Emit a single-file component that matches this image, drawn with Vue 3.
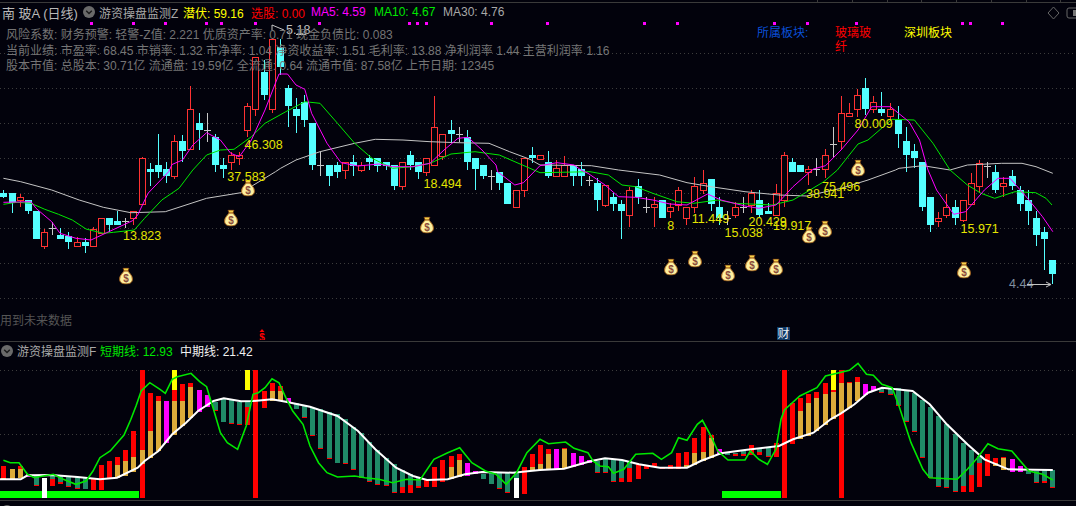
<script setup>
// x position of bar i, same grid for both panels
const barX = (i) => Math.round(3.4 + 8.13 * i);

// [kind, high, bodyTop, bodyBottom, low]  c = falling, r = rising, x = doji cross
const candles = [
  ["c",190,193.3,196.7,198.3],["c",193.3,193.3,203.3,213.3],["r",194.3,197.7,200.7,206.7],["c",200,200,210.7,214],
  ["c",210.7,210.7,239,239],["r",229.3,232.3,246.7,248.7],["x",221.7,228.3,228.3,235],["c",228.3,235,239,239],
  ["c",231.7,235.7,241.7,248.7],["r",236.7,242.3,246.7,246.7],["c",238.3,242.3,246,252.7],["r",227.3,229,246.7,246.7],
  ["r",218.3,218.3,233.3,233.3],["c",218.3,218.3,225,232.3],["c",210.7,221,225,225],["x",218.3,221.7,221.7,228.3],
  ["r",211.3,211.3,218.7,225],["r",156.7,158.3,204.7,204.7],["c",163.3,169,172,185.7],["c",134.3,165,172,178.3],
  ["c",162,169,176,183.3],["r",135,141.7,176.7,179],["c",135,141,150.7,162.3],["r",86,109.3,149,149],
  ["c",113.3,123.3,130,150],["x",113.3,130.7,130.7,141.7],["c",134.3,137.3,165,172],["c",158.3,165,169,178.3],
  ["r",151.7,155,162.3,170],["r",151.7,155,158.3,165],["r",103.3,106.7,130,136.7],["r",57.3,57.3,109.3,115.7],
  ["c",60,71.7,95,100],["r",38,39.3,109.3,113.3],["c",39.3,46.7,66.7,75],["c",85,88.3,106,126.7],
  ["c",98.3,109,115.7,133.3],["c",95,101.7,120,126.7],["c",123.3,123.3,165,170],["x",151.7,165,165,176],
  ["c",165,165,176,185.7],["c",161.7,165,172,178.3],["r",162.7,162.7,170,179],["c",155,162.3,165.7,176],
  ["r",161.7,165.7,170,171.7],["c",155,158.3,162.3,170],["c",158.3,158.3,165.7,171.7],["c",162.3,162.3,165.7,170],
  ["c",165,165,185.7,190],["r",162.3,162.3,186.7,190],["c",150.7,155,165,170],["c",162.3,162.3,171.7,179],
  ["r",158.3,158.3,172.7,176],["r",96,127.3,165,165],["r",134.3,134.3,156.7,160],["c",120,130,134,143.3],
  ["x",126.7,134.3,134.3,141.7],["c",130,136.7,161.7,170],["c",158.3,158.3,169,190],["c",165,165,176,179],
  ["x",170,176,176,190],["c",172,172,182.7,190],["c",182.7,182.7,204,204],["r",190,190,207.7,207.7],
  ["r",158.3,158.3,190.7,196.7],["c",146.7,155,158.3,163.3],["r",155,155,159,159],["c",151,162.3,176,178.3],
  ["r",160,168,176.7,176.7],["r",156,165,176,176],["c",165,165,176,185.7],["c",162.3,169,176,185.7],
  ["x",176,180.7,180.7,185.7],["c",178.3,182.7,200,210.7],["r",185.7,185.7,205,206.7],["c",193.3,196.7,204,210.7],
  ["c",200,204,210.7,239],["r",186.7,190,215,227.3],["c",179.3,185.7,196.7,204],["x",197.3,207.3,207.3,213.3],
  ["r",196.7,204,207.7,227.3],["c",200,200,218,218],["r",203.3,207.3,211.3,218.3],["r",187.3,190.3,205,210.7],
  ["r",207.3,207.3,218.7,225],["r",177.3,186,207.3,213.3],["r",170,183.3,190.7,194],["c",179,179,204,210.7],
  ["c",196.7,207.3,218,225],["x",210.7,218,218,225],["r",201.7,207.3,215,218.3],["x",197.3,207.3,207.3,213.3],
  ["r",190,193.3,205,213.3],["c",190,200,215,217.3],["c",203.3,210.7,214.3,214.3],["r",184,193.3,215,215],
  ["r",152.3,155,200.7,206.7],["c",158.3,162.3,171.7,171.7],["c",165,165,171.7,171.7],["r",166,169,172.7,185],
  ["x",158.3,169,169,176],["r",149,155,169,178.3],["x",127,144.3,144.3,158.3],["r",96,113.3,141.7,150],
  ["r",103.3,113.3,116.7,116.7],["r",89,95.7,109.3,116.7],["c",78.3,88.3,109.3,115],["r",96,102.7,109.3,113.3],
  ["c",92.3,109.3,112.7,116],["r",103.3,109.3,116.7,120],["c",106,120,134,147.7],["c",127,141,155,172],
  ["c",144,151,157.7,168],["c",162.3,162.3,206.7,210.7],["c",196.7,196.7,225,232],["r",212,218.3,221.7,227.3],
  ["r",194,207.3,215,218.3],["c",200,207.3,218,225],["r",200,200,220,221.7],["r",173.3,183.3,204,205],
  ["r",160,163,186.7,193.3],["x",162.3,166.7,166.7,178.3],["c",165,171.7,190,192.7],["r",176.7,183.3,186.7,196.7],
  ["c",170,176,186,190],["c",186,190,204,210.7],["c",190,200,210.7,225],["c",210.7,218,235,246],
  ["c",227.3,232,239,270],["c",260,260,274,284],
];

const ma5 = [[3.4,202.3],[31,201.7],[36,208.3],[51.7,221.7],[60,233.3],[76,238.3],[91,240],[106.7,232.7],[132.6,220.7],[137.7,215],[148,193.3],[168.7,171.7],[172,164.5],[182.5,160],[192.8,145],[206.6,132.7],[220.4,140],[230.7,153.3],[239.3,156.7],[251.4,140],[265,110],[279,74],[287.5,74],[296,85],[304.8,89.3],[311.6,113.3],[327,143.3],[341,162.7],[358,166],[378.8,164],[392.6,166.7],[413,166.7],[430,163.3],[444,150],[458,138.3],[468,137.3],[482,150],[496,165],[497.6,171.7],[514.8,185],[523.4,182.7],[540,165.7],[557,162.7],[574,165],[581,170],[588,173.3],[605,185],[618.6,196.7],[635.7,197.3],[652.8,200],[670,204],[687,205],[707.5,194],[721,200],[745,206],[758.8,208.3],[776,205],[793,186.7],[810,171.7],[813.5,169],[825.5,165.7],[841,150],[858,130],[871.6,106.7],[890.4,106.7],[909,121.7],[919.5,140],[926,163.3],[928,170],[936.6,190],[953.7,214.3],[965.6,211.7],[984.4,190],[998,178.3],[1010,178.3],[1029,200],[1042.5,216.7],[1052.8,231.7]];
const ma10 = [[3.4,204.3],[17,202.3],[31,203.3],[44.8,209.3],[58.5,214.3],[72.3,220],[86,229],[103.3,233.3],[113.6,232.3],[134.3,230],[144.6,218.3],[161.8,200],[179,188.3],[192.8,170],[206.6,155],[220.4,150],[234,149.3],[251.4,136.7],[265,123.3],[285.8,111.7],[304.8,101.7],[320,103.3],[337.5,123.3],[354.7,143.3],[372,158.3],[392.6,168.3],[413,166.7],[430,163.3],[451,154],[475,151.7],[499.3,155],[527,167],[540,172.7],[590,171.7],[608.4,175],[622,185],[635.7,186.7],[652.8,193.3],[676.8,201.7],[693.8,203.3],[717.8,200],[734.9,203.3],[772.5,205],[793,200],[810,190],[823.8,181.7],[837.4,170],[858,144],[868,140],[892,119.3],[914.4,120],[933,143.3],[950,170],[967.4,185],[981,193.3],[994.7,198.3],[1015,191.7],[1035.7,192.7],[1046,198.3],[1052,205]];
const ma30 = [[3.4,178.3],[20.7,181.7],[51.7,190],[79.2,200],[103.3,207.3],[130.8,212.7],[165.3,211.7],[206.6,198.3],[241,192.7],[275.5,171.7],[280.6,168.3],[296,160],[320,151.7],[354.7,143.3],[375.3,139.3],[403,140],[430,141.7],[458,142.7],[489,143.3],[509.6,151.7],[530,159.3],[540,165],[591.3,165.7],[618.6,170],[659.7,175],[687,182.7],[711,186.7],[745,191.7],[779,195],[806.7,196],[841,188.3],[868,180],[895.5,170],[899,168.3],[923,165.7],[950,170],[967.4,165],[1001.5,163.3],[1022,163.3],[1036,166.7],[1052.8,173.3]];

const points = (line) => line.map((p) => p.join(",")).join(" ");

const mainGrid = [53.5, 88.5, 123.5, 158.5, 193.5, 228.5, 263.5, 298.5];
const subGrid = [370.5, 434.5];
const marks = [91,133,165,206,221,255,319,409,417,426,491,547,644,677,774,807,856,962,970,1002];
const ticks = [817,852,887,921,956,991,1026,1060];

const labels = [
  ["46.308",244.5,144.3],["37.583",227.3,176.7],["13.823",123,235.7],["18.494",423.5,183.3],
  ["80.009",854.5,123.7],["75.496",822,186.7],["38.941",806,193.3],["11.449",691.8,218.7],
  ["8",667.2,225.3],["15.038",724.6,232.7],["20.429",748.5,221.7],["19.917",773,225.3],["15.971",960.5,228.7],
];
const bags = [[126,276],[231,218],[248,188],[427,225],[671,267],[695,259],[728,273],[752,263],[776,267],[809,235],[825,229],[858,168],[964,270]];

// stacked segments of each lower bar: r red, g gold, m magenta, t teal, y yellow, w white
const stacks = [
  ["r",466,477.7,"g",477.7,479.3],["g",468.7,479.3],["r",466,468.7,"g",468.7,477.7],["m",473.7,476.7],
  ["t",476,485.3,"r",485.3,486],["w",477.7,498],["t",475.3,479.3,"r",479.3,486],["t",476,481.7,"r",481.7,483.7],
  ["t",476,486,"r",486,487],["t",477,487.7,"r",487.7,488.7],["t",477.7,488.7,"r",488.7,489.3],["r",478.3,490],
  ["r",465,490],["r",461,479.3],["r",457,465,"g",465,477.7],["r",450,461,"g",461,476],
  ["r",431,457,"g",457,472],["r",370,450,"g",450,464,"r",464,498],["r",392.7,431,"g",431,457.7],["r",396,401,"g",401,451],
  ["m",401,443.3],["y",370,390.3,"r",390.3,401,"g",401,435],["r",383.7,401,"g",401,426],["r",383.3,387,"g",387,417.7],
  ["m",390,412],["m",395.3,407],["t",401.7,410,"r",410,410.7],["t",399.3,421.7,"r",421.7,422.3],
  ["t",399.3,423.3,"r",423.3,424],["t",401.7,424.3,"r",424.3,425],["y",370,389.7,"t",401.7,407,"r",407,425],["r",370,498],
  ["r",391,407.7],["r",382.7,391,"g",391,401],["r",386,391,"g",391,401],["m",397.7,402.7],
  ["t",402.7,408.7,"r",408.7,409.3],["t",405,417,"r",417,417.7],["t",407.7,435,"r",435,435.7],["t",409.3,448.3,"r",448.3,449],
  ["t",412,458.3,"r",458.3,459],["t",414.3,462.7,"r",462.7,463.3],["t",419.3,463.3,"r",463.3,464],["t",426.7,469.3,"r",469.3,470],
  ["t",433.3,477,"r",477,477.7],["t",442,481.3,"r",481.3,482],["t",450.3,484.3,"r",484.3,485],["t",457.7,485.3,"r",485.3,486],
  ["t",464.3,492.7,"r",492,492.7],["t",470.3,486.7,"r",486.7,492.7],["t",474.3,485.3,"r",485.3,492.7],["t",477,486,"r",486,487.7],
  ["r",480.3,487],["r",467,487],["r",460.3,481.7],["r",456,467,"g",467,479.3],
  ["r",453.7,460,"g",460,477],["m",462.7,476],["m",471,474.3],["t",473.7,479.3],
  ["t",473.3,483.7],["t",473.3,488,"r",488,488.7],["t",473.3,492,"r",492,492.7],["t",473.3,477.7,"w",477.7,498],
  ["r",467,493.7],["r",454.3,467,"g",467,471],["r",445,463.7,"g",463.7,470],["r",449.3,453.7,"g",453.7,470],
  ["m",448.7,469.3],["r",448.3,449.3,"g",449.3,468.7],["m",452.7,467],["m",456,465],
  ["m",460,463.3],["t",461.3,472,"r",472,472.7],["t",459.3,472,"r",472,472.7],["t",459.3,481,"r",481,481.7],
  ["t",460,477.7,"r",477.7,481.7],["t",461,467.7,"r",467.7,481.7],["r",463.7,479],["r",465.7,469],
  ["r",463,467],["r",467.3,468.7],["r",465,468.7],["r",453,468.7],
  ["r",452,465,"g",465,468.3],["r",437.7,452.7,"g",452.7,465.3],["r",426.7,452,"g",452,461],["r",435,437.7,"g",437.7,457.7],
  ["m",448.7,455.3],["t",452.7,454.7,"r",454.7,455.3],["t",452.7,454.3,"r",454.3,456],["t",451,453.7,"r",453.7,455.7],
  ["r",445,455],["t",448,452,"r",452,455],["t",447,456,"r",456,456.7],["r",443.3,457],
  ["r",370,498],["r",402.7,443.7],["r",397.7,411,"g",411,438.7],["r",393.7,403,"g",403,436],
  ["r",392,397.7,"g",397.7,431],["r",382.7,393.7,"g",393.7,425.3],["y",370,390.3,"r",390.3,392,"g",392,419.3],["r",370,382.7,"g",382.7,413.3,"r",413.3,498],
  ["r",382,383,"g",383,408],["r",377,382,"g",382,401.3],["m",384,395.3],["m",386,391],
  ["t",388,392,"r",392,393],["t",387,394.3,"r",394.3,395],["t",388,405,"r",405,405.7],["t",390,421,"r",421,421.7],
  ["t",393,431,"r",431,432],["t",400,457,"r",457,457.7],["t",407,477,"r",477,477.7],["t",416,486,"r",486,487],
  ["t",424.3,487,"r",487,488],["t",433.7,491,"r",491,492],["t",442.7,486,"r",486,492],["t",450.3,475,"r",475,492],
  ["t",456,463,"r",463,487],["r",453.7,476],["r",457.7,463,"g",463,466],["r",457,458.3,"g",458.3,470],
  ["m",459,472],["m",466,472],["t",470.7,473.7],["t",471,482,"r",482,483],
  ["t",470,481,"r",481,483],["t",470,487,"r",487,488],
];
const barColors = { r: "#ff0000", g: "#dcab3a", m: "#ff00ff", t: "#208a68", y: "#ffff00", w: "#ffffff" };
const segments = stacks.flatMap((s, i) => {
  const out = [];
  for (let k = 0; k < s.length; k += 3) {
    out.push({ x: barX(i) - 2, y: s[k + 1], h: s[k + 2] - s[k + 1], fill: barColors[s[k]] });
  }
  return out;
});

const midLine = [[0,479.3],[20.7,479.3],[27.5,475.3],[51.7,475],[77.5,477],[99.9,479.3],[117,477.7],[137.7,467.7],[144.6,461],[158.4,451],[172.2,434.3],[186,422.7],[198,411],[213.5,401],[223.8,398.3],[241,401.3],[253,401],[272,399.3],[285.8,401.7],[310,406.7],[337.5,416],[358,431],[375.3,449.3],[396,467.7],[413,476],[427,480],[447.7,479.3],[465,474.3],[482,472],[513,472.7],[530,471],[540,470],[564,468.7],[591.3,461],[605,458.3],[622,460],[639,464.3],[659.7,467.7],[687,467.7],[700.7,461],[721,453.3],[745,450],[779,446],[793,439.3],[813.5,432.7],[830.6,419.3],[841,413.3],[854.5,404.3],[868,392.7],[882,387.7],[912.6,391],[929.7,404.3],[946.8,424.3],[967.4,444.3],[984.4,459.3],[1008.4,469.3],[1052.8,470]];
const shortLine = [[3.4,460.3],[10.3,462.7],[19,462.7],[27.5,474.3],[34.4,477.7],[43,476],[53.4,474.3],[62,478.7],[75.8,484.3],[86,481],[93,471],[99.9,457.7],[110.2,451],[124,435],[130.9,419.3],[136,406],[141.2,391],[149.8,382.7],[160,389.3],[165.3,393.3],[172.2,379.3],[177.3,376.7],[191,373.3],[199.7,381.7],[206.6,386.7],[213.5,409.3],[220.4,432.7],[227.3,442.7],[237.6,449.3],[246.2,426],[253,394.3],[258.3,392.7],[265,387.7],[272,378.7],[279,382.7],[285.8,397.7],[292.7,411],[303,424.3],[310,446],[318.5,462.7],[327,472.7],[337.5,477],[354.7,476],[365,477.7],[378.8,479.3],[392.6,482.7],[406.5,479.3],[420,480],[433.9,459.3],[447.7,452.7],[459.7,447.7],[471.8,462.7],[485.5,471],[495.9,474.3],[506.2,484.3],[516.5,472.7],[526.9,452.7],[540,439.3],[548.5,443.7],[565.6,442],[574,448.3],[587.9,452.7],[593,461],[599.8,466],[608.4,466.7],[613.5,473.3],[623.8,469.3],[635.7,454.3],[652.8,453.3],[661.4,459.3],[671.6,452.7],[678.5,437.7],[687,440.3],[697.3,424.3],[702.4,420.3],[711,436],[717.8,451],[728,460],[745,460],[750.3,451],[758.8,459.3],[767.4,464.3],[775.9,449.3],[781,419.3],[784.4,410],[799.8,396],[816.9,387.7],[825.5,376],[849.4,370.3],[858,363.3],[866.5,374.3],[873.3,375.3],[881.9,384.3],[892.1,387.7],[899,406],[911,442.7],[922.9,469.3],[929.7,477.7],[957.1,479.3],[967.4,469.3],[977.6,457.7],[987.9,443.7],[998,448.7],[1011.8,451],[1028.9,471],[1042.6,474.3],[1052.8,480]];
</script>

<template>
  <div class="terminal">
    <!-- K line panel -->
    <section class="panel main">
      <svg class="chart" viewBox="0 0 1076 340">
        <defs>
          <symbol id="bag" viewBox="0 0 14 17">
            <path d="M4 0.6h6l-1 3h-4z" fill="#f4d24a" stroke="#7a3a12" stroke-width="0.8" />
            <path d="M5 3.6h4c1 2 4.4 4 4.4 8 0 3.4-2.6 4.8-6.4 4.8s-6.4-1.4-6.4-4.8c0-4 3.4-6 4.4-8z" fill="#fdf0a0" stroke="#a8641c" stroke-width="1" />
            <text x="7" y="14" text-anchor="middle" class="bag-sign">$</text>
          </symbol>
        </defs>

        <line x1="0" y1="2.5" x2="1076" y2="2.5" class="frame" />
        <line v-for="x in ticks" :key="'t' + x" :x1="x + 0.5" y1="0" :x2="x + 0.5" y2="2" class="frame" />
        <line v-for="y in mainGrid" :key="y" x1="0" :y1="y" x2="1076" :y2="y" class="grid" />

        <rect v-for="x in marks" :key="'m' + x" :x="x - 1" y="22" width="3" height="3" fill="#ff00ff" />

        <g v-for="(c, i) in candles" :key="i" class="candle">
          <template v-if="c[0] === 'x'">
            <line :x1="barX(i) + 0.5" :y1="c[1]" :x2="barX(i) + 0.5" :y2="c[4]" stroke="#c8c8c8" />
            <line :x1="barX(i) - 3" :y1="c[2]" :x2="barX(i) + 4" :y2="c[2]" stroke="#c8c8c8" />
          </template>
          <template v-else-if="c[0] === 'c'">
            <line :x1="barX(i) + 0.5" :y1="c[1]" :x2="barX(i) + 0.5" :y2="c[4]" stroke="#54ffff" />
            <rect :x="barX(i) - 3" :y="c[2]" width="7" :height="Math.max(c[3] - c[2], 1)" fill="#54ffff" />
          </template>
          <template v-else>
            <line :x1="barX(i) + 0.5" :y1="c[1]" :x2="barX(i) + 0.5" :y2="c[2]" stroke="#ff3232" />
            <line :x1="barX(i) + 0.5" :y1="c[3]" :x2="barX(i) + 0.5" :y2="c[4]" stroke="#ff3232" />
            <rect :x="barX(i) - 2.5" :y="c[2]" width="6" :height="c[3] - c[2]" fill="#02020c" stroke="#ff3232" />
          </template>
        </g>

        <polyline :points="points(ma30)" class="ma" stroke="#c4c4c4" />
        <polyline :points="points(ma10)" class="ma" stroke="#00e800" />
        <polyline :points="points(ma5)" class="ma" stroke="#ff00ff" />

        <use v-for="b in bags" :key="b[0]" href="#bag" :x="b[0] - 7" :y="b[1] - 8.5" width="14" height="17" />
        <text v-for="l in labels" :key="l[0]" :x="l[1]" :y="l[2] + 4.5" class="value">{{ l[0] }}</text>

        <!-- high / low notes -->
        <polyline points="272,30 272,25 284,30" class="note" />
        <line x1="296" y1="34.5" x2="306" y2="34.5" class="note" />
        <text x="286" y="34" class="note-text">5.18</text>
        <text x="1009" y="288" class="note-text low">4.44</text>
        <polyline points="1027,284.5 1051,284.5 1046,282 M1051,284.5" class="note" />
        <polyline points="1051,284.5 1046,287" class="note" />

        <!-- bottom markers -->
        <polygon points="262,329 259.5,332 264.5,332" fill="#ff0000" />
        <text x="262" y="341" text-anchor="middle" class="red-sign">$</text>
        <rect x="777" y="327" width="13" height="13" fill="#0f3a66" />
        <text x="783.5" y="338" text-anchor="middle" class="cai">财</text>

        <!-- top right controls -->
        <polygon points="1053.5,7 1059,13 1053.5,19 1048,13" class="control" />
        <rect x="1067" y="8" width="14" height="10" rx="2" class="control" />
        <rect x="1073" y="10" width="8" height="6" fill="#777" />
      </svg>

      <header class="legend">
        <span class="name">南 玻A (日线)</span>
        <svg class="toggle" viewBox="0 0 12 12"><circle cx="6" cy="6" r="6" fill="#6a6a6a" /><path d="M3.2 4.8 6 7.6l2.8-2.8" fill="none" stroke="#1a1a1a" stroke-width="1.4" /></svg>
        <span class="title">游资操盘监测Z</span>
        <span class="yellow">潜伏: 59.16</span>
        <span class="red">选股: 0.00</span>
        <span class="magenta">MA5: 4.59</span>
        <span class="green">MA10: 4.67</span>
        <span class="silver">MA30: 4.76</span>
      </header>

      <div class="info">
        <div>风险系数: 财务预警: 轻警-Z值: 2.221 优质资产率: 0.71 现金负债比: 0.083</div>
        <div>当前业绩: 市盈率: 68.45 市销率: 1.32 市净率: 1.04 净资收益率: 1.51 毛利率: 13.88 净利润率 1.44 主营利润率 1.16</div>
        <div>股本市值: 总股本: 30.71亿 流通盘: 19.59亿 全流通: 0.64 流通市值: 87.58亿 上市日期: 12345</div>
      </div>

      <div class="sectors">
        <span class="blue">所属板块:</span>
        <span class="red">玻璃玻纤</span>
        <span class="yellow">深圳板块</span>
      </div>

      <div class="warn">用到未来数据</div>
    </section>

    <!-- indicator panel -->
    <section class="panel sub">
      <svg class="chart" viewBox="0 342 1076 158">
        <line v-for="y in subGrid" :key="y" x1="0" :y1="y" x2="1076" :y2="y" class="grid" />
        <rect x="0" y="491" width="139" height="7" fill="#00ff00" />
        <rect x="722" y="491" width="59" height="7" fill="#00ff00" />
        <rect v-for="(s, i) in segments" :key="i" :x="s.x" :y="s.y" width="5" :height="s.h" :fill="s.fill" class="seg" />
        <polyline :points="points(midLine)" class="mid" />
        <polyline :points="points(shortLine)" class="short" />
      </svg>
      <header class="legend small">
        <svg class="toggle" viewBox="0 0 12 12"><circle cx="6" cy="6" r="6" fill="#6a6a6a" /><path d="M3.2 4.8 6 7.6l2.8-2.8" fill="none" stroke="#1a1a1a" stroke-width="1.4" /></svg>
        <span class="title">游资操盘监测F</span>
        <span class="green">短期线: 12.93</span>
        <span class="white">中期线: 21.42</span>
      </header>
    </section>

    <!-- MACD panel, only the top edge is on screen -->
    <section class="panel macd">
      <header class="legend small">
        <svg class="toggle" viewBox="0 0 12 12"><circle cx="6" cy="6" r="6" fill="#6a6a6a" /></svg>
        <span class="title">MACD(12,26,9)</span>
        <span class="white">DIF: -0.05</span>
        <span class="yellow">DEA: -0.02</span>
        <span class="magenta">MACD: -0.05</span>
      </header>
    </section>
  </div>
</template>

<style scoped>
.terminal {
  width: 1076px;
  height: 506px;
  overflow: hidden;
  display: flex;
  flex-direction: column;
  background: #02020c;
  font-family: "Liberation Sans", "Noto Sans CJK SC", sans-serif;
  font-size: 12px;
  color: #777;
}
.panel {
  position: relative;
  flex: none;
}
.main {
  height: 341px;
  border-bottom: 1px solid #3a3a3a;
  display: flex;
  flex-direction: column;
}
.sub {
  height: 158px;
  border-bottom: 1px solid #3a3a3a;
}
.macd {
  height: 20px;
}
.chart {
  position: absolute;
  left: 0;
  top: 0;
  width: 1076px;
  height: 100%;
}
.main .chart {
  height: 340px;
}

.legend {
  position: relative;
  display: flex;
  align-items: center;
  height: 16px;
  margin-top: 4px;
  padding-left: 2px;
  white-space: nowrap;
}
.legend.small {
  margin-top: 0;
  height: 17px;
  padding-left: 1px;
}
.macd .legend {
  margin-top: 1px;
}
.name {
  color: #b8b8b8;
  font-size: 13px;
  width: 81px;
}
.toggle {
  width: 12px;
  height: 12px;
  margin-right: 4px;
  flex: none;
}
.title {
  color: #a8a8a8;
  width: 84px;
}
.legend.small .title {
  width: 83px;
}
.macd .title {
  width: 88px;
}
.legend span + span {
  margin-right: 8px;
}
.main .legend .yellow { width: 60px; margin-right: 8px; }
.main .legend .red { width: 52px; margin-right: 8px; }
.main .legend .magenta { width: 55px; margin-right: 8px; }
.main .legend .green { width: 61px; margin-right: 8px; }
.sub .legend .green { width: 72px; margin-right: 8px; }
.macd .legend .white { width: 55px; }
.macd .legend .yellow { width: 56px; }

.yellow { color: #ffff00; }
.red { color: #ff0000; }
.magenta { color: #ff00ff; }
.green { color: #00e800; }
.silver { color: #a8a8a8; }
.white { color: #f0f0f0; }
.blue { color: #0a50d8; }

.info {
  position: relative;
  margin-top: 8px;
  padding-left: 6px;
  line-height: 15.5px;
  white-space: nowrap;
  color: #757575;
}
.sectors {
  position: absolute;
  left: 757px;
  top: 26px;
  display: flex;
  gap: 26px;
  line-height: 14px;
}
.sectors .blue { width: 52px; }
.sectors .red { width: 43px; }
.warn {
  position: relative;
  margin-top: auto;
  margin-bottom: 13px;
  color: #555;
}

/* svg parts */
.frame { stroke: #3a3a3a; stroke-width: 1; }
.grid { stroke: #3c3c3c; stroke-width: 1; stroke-dasharray: 1 3; }
.candle line, .candle rect, .seg { shape-rendering: crispEdges; }
.ma { fill: none; stroke-width: 1; }
.mid { fill: none; stroke: #ffffff; stroke-width: 2; }
.short { fill: none; stroke: #00e800; stroke-width: 1.6; }
.value { fill: #e4e400; font-size: 12.5px; font-family: "Liberation Sans", sans-serif; }
.bag-sign { fill: #8a4a3a; font-size: 10px; font-weight: 700; font-family: "Liberation Sans", sans-serif; }
.note { fill: none; stroke: #c4c4c4; stroke-width: 1; }
.note-text { fill: #c0c0c0; font-size: 12.5px; font-family: "Liberation Sans", sans-serif; }
.note-text.low { fill: #8090a0; }
.red-sign { fill: #ff0000; font-size: 10px; font-weight: 700; font-family: "Liberation Sans", sans-serif; }
.cai { fill: #e8eef4; font-size: 12px; font-family: "Noto Sans CJK SC", sans-serif; }
.control { fill: none; stroke: #666; stroke-width: 1; }
</style>

<style>
html, body { background: #02020c; overflow: hidden; }
</style>
